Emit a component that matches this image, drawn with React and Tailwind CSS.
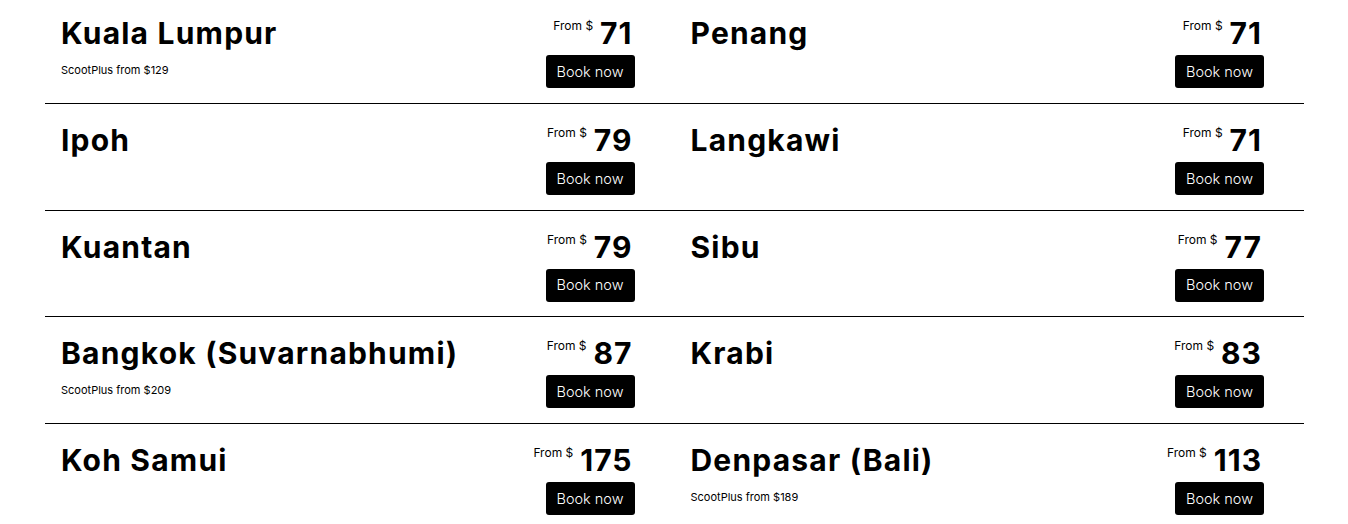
const left = [
  { city: "Kuala Lumpur", price: "71", plus: "ScootPlus from $129" },
  { city: "Ipoh", price: "79" },
  { city: "Kuantan", price: "79" },
  { city: "Bangkok (Suvarnabhumi)", price: "87", plus: "ScootPlus from $209" },
  { city: "Koh Samui", price: "175" },
];
const right = [
  { city: "Penang", price: "71" },
  { city: "Langkawi", price: "71" },
  { city: "Sibu", price: "77" },
  { city: "Krabi", price: "83" },
  { city: "Denpasar (Bali)", price: "113", plus: "ScootPlus from $189" },
];

function Row({ item }) {
  return (
    <div className="h-[106.67px] border-b border-black flex justify-between items-start pl-4 pr-10 pt-[18px]">
      <div className="flex flex-col">
        <div className="text-[30px] leading-[36px] font-bold text-black tracking-[1.2px]">{item.city}</div>
        {item.plus && (
          <div className="text-[11px] leading-[14px] mt-3 text-black">{item.plus}</div>
        )}
      </div>
      <div className="flex flex-col items-end">
        <div className="flex items-start pr-[2px]">
          <span className="text-[12px] leading-[16px] mt-[3px] text-black">From $</span>
          <span className="ml-[7px] text-[30px] leading-[36px] font-bold text-black tracking-[1px]">{item.price}</span>
        </div>
        <button className="mt-1 h-[33px] w-[89px] rounded-[3px] bg-black text-white text-[14.5px] font-light flex items-center justify-center">
          Book now
        </button>
      </div>
    </div>
  );
}

export default function App() {
  const rows = [];
  for (let i = 0; i < left.length; i++) {
    rows.push(<Row key={"l" + i} item={left[i]} />);
    rows.push(<Row key={"r" + i} item={right[i]} />);
  }
  return (
    <div className="w-[1348px] h-[524px] overflow-hidden bg-white" style={{ fontFamily: "Inter, 'Noto Sans', sans-serif" }}>
      <div className="w-[1259px] ml-[45px] mt-[-2.67px] grid grid-cols-2">{rows}</div>
    </div>
  );
}
